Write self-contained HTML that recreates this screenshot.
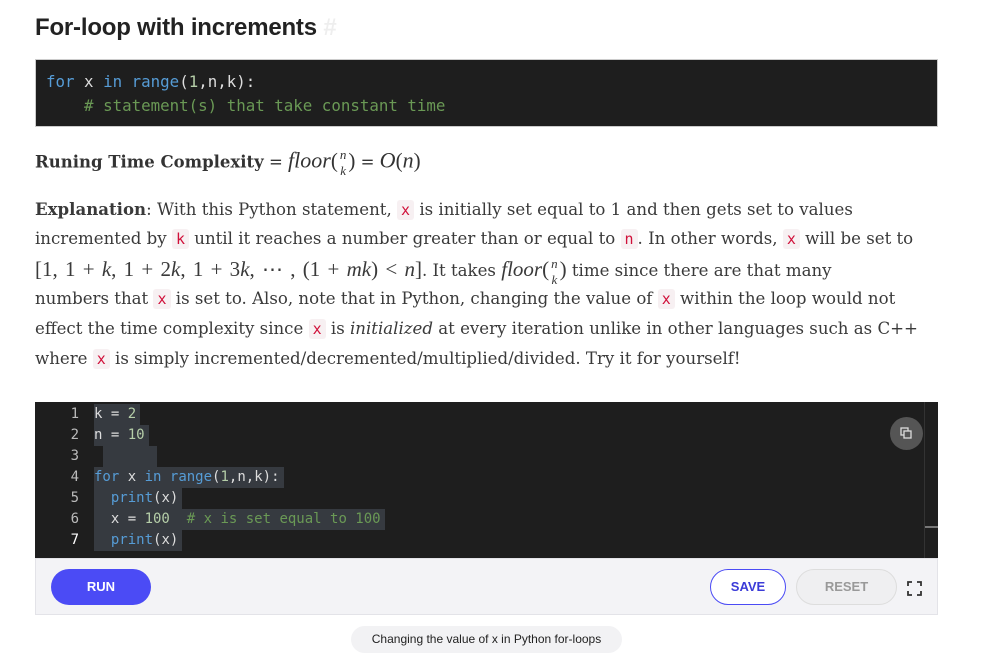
<!DOCTYPE html>
<html><head><style>
body{margin:0;background:#fff;width:989px;height:662px;overflow:hidden;font-family:"DejaVu Serif",serif;color:#333}
h1{position:absolute;left:35px;top:14px;margin:0;font:bold 24px "Liberation Sans",sans-serif;color:#222;letter-spacing:-0.2px}
h1 span{color:#eee}
.code1{position:absolute;left:35px;top:59px;width:903px;height:68px;background:#1e1e1e;border:1px solid #ccc;font:15.8px "DejaVu Sans Mono",monospace;line-height:24px;padding-top:10px;box-sizing:border-box;padding-left:10px;color:#ddd;white-space:pre}
.kw{color:#569cd6}.num{color:#b5cea8}.cm{color:#6a9955}
.rt{position:absolute;left:35px;top:147px;font-size:16.5px;white-space:nowrap}
.rt i.m{font-size:22px}
.p{position:absolute;left:35px;top:194px;font-size:16.6px;color:#3a3a3a}
.p div{height:30px;line-height:30px;white-space:nowrap}
code{font:15px "DejaVu Sans Mono",monospace;color:#d0103a;background:#f7f0f2;border-radius:3px;padding:1px 4px}
i.m{font-family:"Liberation Serif",serif;font-size:21px}
.mm{font-family:"Liberation Serif",serif;font-size:21px;word-spacing:2px}
.fr{display:inline-block;vertical-align:middle;line-height:10px;font:italic 13px "Liberation Serif",serif;text-align:center;margin:0 2px}
.ed{position:absolute;left:35px;top:402px;width:903px;height:156px;background:#1e1e1e;font:14px "DejaVu Sans Mono",monospace;color:#ddd}
.ln{position:absolute;left:0;width:44px;text-align:right;color:#bbb}
.cl{position:absolute;left:59px;background:#363a40;padding-right:4px;white-space:pre;height:21px;line-height:21px}
.ft{position:absolute;left:35px;top:558px;width:903px;height:57px;background:#f3f3f6;border:1px solid #e3e3e8;box-sizing:border-box}
.btn{position:absolute;font:bold 13px "Liberation Sans",sans-serif;text-align:center;border-radius:18px}
.cap{position:absolute;left:351px;top:626px;width:271px;height:27px;background:#f2f2f4;border-radius:14px;font:12px "Liberation Sans",sans-serif;color:#222;text-align:center;line-height:27px}
</style></head><body>
<h1>For-loop with increments <span>#</span></h1>
<div class="code1"><span class="kw">for</span> x <span class="kw">in</span> <span class="kw">range</span>(<span class="num">1</span>,n,k):
<span class="cm">    # statement(s) that take constant time</span></div>
<div class="rt"><b>Runing Time Complexity</b> = <i class="m">floor</i><span class="mm">(</span><span class="fr">n<br>k</span><span class="mm">)</span> = <i class="m">O</i><span class="mm">(</span><i class="m">n</i><span class="mm">)</span></div>
<div class="p">
<div><b>Explanation</b>: With this Python statement, <code>x</code> is initially set equal to 1 and then gets set to values</div>
<div>incremented by <code>k</code> until it reaches a number greater than or equal to <code>n</code>. In other words, <code>x</code> will be set to</div>
<div><span class="mm">[1,&nbsp;1 + <i>k</i>,&nbsp;1 + 2<i>k</i>,&nbsp;1 + 3<i>k</i>,&nbsp;⋯ ,&nbsp;(1 + <i>mk</i>) &lt; <i>n</i>]</span>. It takes <i class="m">floor</i><span class="mm">(</span><span class="fr">n<br>k</span><span class="mm">)</span> time since there are that many</div>
<div>numbers that <code>x</code> is set to. Also, note that in Python, changing the value of <code>x</code> within the loop would not</div>
<div>effect the time complexity since <code>x</code> is <i>initialized</i> at every iteration unlike in other languages such as C++</div>
<div>where <code>x</code> is simply incremented/decremented/multiplied/divided. Try it for yourself!</div>
</div>
<div class="ed">
<div class="ln" style="top:2px;line-height:21px">1<br>2<br>3<br>4<br>5<br>6<br><span style="color:#fff">7</span></div>
<div class="cl" style="top:2px">k = <span class="num">2</span></div>
<div class="cl" style="top:23px">n = <span class="num">10</span></div>
<div class="cl" style="top:44px;left:68px;width:50px"> </div>
<div class="cl" style="top:65px"><span class="kw">for</span> x <span class="kw">in</span> <span class="kw">range</span>(<span class="num">1</span>,n,k):</div>
<div class="cl" style="top:86px">  <span class="kw">print</span>(x)</div>
<div class="cl" style="top:107px">  x = <span class="num">100</span>  <span class="cm"># x is set equal to 100</span></div>
<div class="cl" style="top:128px">  <span class="kw">print</span>(x)</div>
<div style="position:absolute;left:855px;top:15px;width:33px;height:33px;border-radius:50%;background:#555"><svg width="33" height="33"><rect x="11" y="11" width="7" height="7" fill="none" stroke="#ddd" stroke-width="1.3"/><rect x="14" y="14" width="7" height="7" fill="#555" stroke="#ddd" stroke-width="1.3"/></svg></div>
<div style="position:absolute;left:889px;top:0;width:1px;height:156px;background:#333"></div>
<div style="position:absolute;left:890px;top:124px;width:13px;height:2px;background:#777"></div>
</div>
<div class="ft">
<div class="btn" style="left:15px;top:10px;width:100px;height:36px;background:#4b4bf5;color:#fff;line-height:36px">RUN</div>
<div class="btn" style="left:674px;top:10px;width:74px;height:34px;border:1px solid #4b4bf5;background:#fff;color:#3b3bd8;line-height:34px">SAVE</div>
<div class="btn" style="left:760px;top:10px;width:99px;height:34px;border:1px solid #ddd;background:#efeff1;color:#999;line-height:34px">RESET</div>
<svg style="position:absolute;left:871px;top:22px" width="15" height="15"><path d="M1 5V1H5M10 1H14V5M14 10V14H10M5 14H1V10" fill="none" stroke="#333" stroke-width="1.8"/></svg>
</div>
<div class="cap">Changing the value of x in Python for-loops</div>
</body></html>
